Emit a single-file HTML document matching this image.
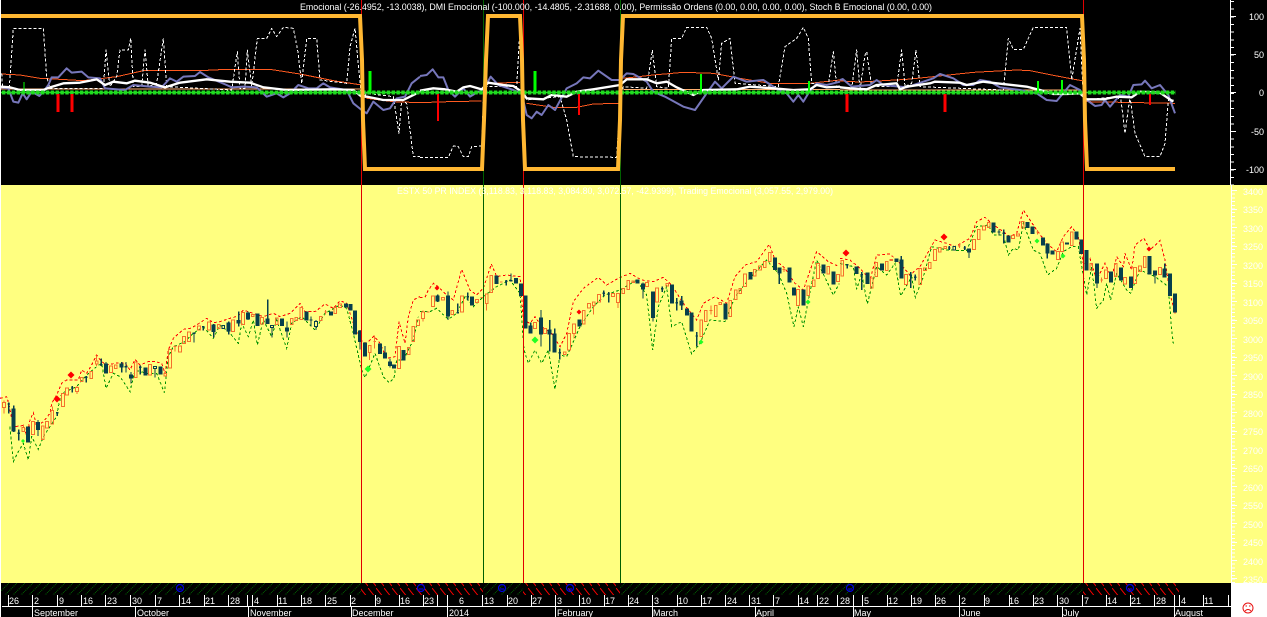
<!DOCTYPE html>
<html><head><meta charset="utf-8"><title>Chart</title>
<style>html,body{margin:0;padding:0;background:#fff;overflow:hidden}svg{display:block}text{font-family:"Liberation Sans",sans-serif;font-size:9px;fill:#fff}</style></head>
<body>
<svg width="1267" height="617" viewBox="0 0 1267 617" xmlns="http://www.w3.org/2000/svg">
<defs>
<pattern id="hg" width="8" height="8" patternUnits="userSpaceOnUse"><path d="M0 8L8 0" stroke="#006400" stroke-dasharray="1 1" fill="none"/></pattern>
<pattern id="hr" width="8" height="12" patternUnits="userSpaceOnUse"><path d="M0 0L8 10" stroke="#f00" fill="none"/></pattern>
</defs>
<rect x="0" y="0" width="1267" height="617" fill="#fff"/>
<rect x="1" y="0" width="1266" height="185" fill="#000"/>
<rect x="1" y="185" width="1266" height="398" fill="#ffff80"/>
<rect x="1" y="583" width="1230" height="34" fill="#000"/>

<!-- top panel lines, section 1 -->
<g transform="scale(.33333)" fill="none" stroke-linejoin="round">
<path stroke="#ffb070" stroke-width="3" shape-rendering="crispEdges" d="M3 267H1085"/>
<path stroke="#ff5a20" stroke-width="3" shape-rendering="crispEdges" d="M3 222L60 225L120 235L180 238L250 242L350 230L430 212L600 212L680 208L810 208L900 222L1000 242L1085 255M1100 295L1180 305L1260 308"/>
<path stroke="#fff" stroke-width="3" stroke-dasharray="9 6" shape-rendering="crispEdges" d="M5 220L8 262L28 262L40 85L130 85L140 230L150 265L310 265L318 150L330 260L350 230L360 150L385 150L392 115L400 260L425 260L435 150L445 260L470 250L490 115L500 260L695 270L712 155L720 265L735 265L742 150L755 260L772 115L800 115L815 85L830 110L850 82L880 85L893 150L905 250L920 115L950 115L960 240L1040 250L1050 140L1065 85L1085 300L1100 280L1180 290L1197 400L1205 300L1220 310L1240 470L1260 470"/>
<path stroke="#7777bb" stroke-width="6" d="M3 262L25 265L40 305L55 308L68 280L80 298L95 275L118 288L130 275L145 255L155 232L175 232L200 205L215 218L245 215L265 232L300 235L315 265L375 270L400 255L450 260L485 262L510 235L530 245L550 230L585 228L600 216L625 232L680 255L695 262L730 260L770 262L800 290L830 280L850 292L870 280L895 255L925 265L950 265L970 250L990 262L1040 270L1060 310L1085 330L1100 340L1120 305L1150 330L1170 325L1190 295L1215 290L1235 250L1260 230"/>
<path stroke="#fff" stroke-width="7" d="M3 260L30 262L60 270L130 270L150 262L190 250L240 248L290 238L315 255L340 245L380 250L405 242L450 248L495 262L540 248L620 238L690 245L750 248L790 262L860 270L1000 268L1060 270L1085 290L1100 290L1150 300L1190 300L1210 300L1260 275"/>
</g>
<!-- section 2 -->
<g transform="translate(420,0) scale(.33333)" fill="none" stroke-linejoin="round">
<path stroke="#ffb070" stroke-width="3" shape-rendering="crispEdges" d="M610 268H1260"/>
<path stroke="#ff5a20" stroke-width="3" shape-rendering="crispEdges" d="M0 308L85 305L185 303M205 250L300 247M320 310L400 322L470 322L520 312L600 310M610 235L700 225L790 217L880 220L960 235L1050 250L1170 250L1260 240"/>
<path stroke="#fff" stroke-width="3" stroke-dasharray="9 6" shape-rendering="crispEdges" d="M0 472L85 472L100 438L115 440L130 470L145 470L155 440L185 438L190 300L200 260L290 260L300 85L305 260L320 300L420 290L440 360L460 470L590 472L600 300L610 260L680 265L697 150L710 260L745 265L755 115L785 115L800 82L860 82L875 115L895 240L905 130L930 115L945 250L1075 260L1095 140L1130 115L1150 82L1165 115L1175 250L1225 255L1240 155L1250 260L1260 260"/>
<path stroke="#7777bb" stroke-width="6" d="M0 228L20 225L38 208L55 232L70 232L85 270L105 290L130 265L150 290L175 275L190 270L212 230L235 255L280 270L305 280L320 345L335 355L350 335L365 345L385 315L405 330L440 265L470 250L490 232L510 235L535 212L575 240L600 240L620 220L640 222L680 245L700 275L735 290L790 320L825 330L860 280L885 245L905 265L940 230L980 245L1030 240L1075 270L1100 280L1120 305L1135 285L1150 305L1165 280L1190 250L1220 255L1260 245"/>
<path stroke="#fff" stroke-width="7" d="M0 272L40 265L75 268L110 275L130 262L150 258L185 268L205 248L250 255L280 258L305 275L320 295L370 298L395 285L440 290L470 275L520 268L600 255L620 238L680 238L710 250L740 245L770 262L820 285L850 270L950 268L990 260L1060 265L1120 270L1170 268L1190 255L1220 262L1260 260"/>
</g>
<!-- section 3 -->
<g transform="translate(840,0) scale(.33333)" fill="none" stroke-linejoin="round">
<path stroke="#ffb070" stroke-width="3" shape-rendering="crispEdges" d="M0 270H720"/>
<path stroke="#ff5a20" stroke-width="3" shape-rendering="crispEdges" d="M0 243L60 246L200 238L280 230L400 217L530 210L570 212L640 226L730 243M740 305L1005 310"/>
<path stroke="#fff" stroke-width="3" stroke-dasharray="9 6" shape-rendering="crispEdges" d="M0 260L35 265L50 150L60 270L75 165L80 155L95 260L170 260L185 150L195 260L215 250L228 150L240 260L490 270L505 115L520 148L550 148L580 82L680 82L695 240L720 85L730 290L740 300L825 290L843 300L855 400L870 290L885 400L915 470L960 470L975 430L985 300L1000 300"/>
<path stroke="#7777bb" stroke-width="6" d="M0 240L8 237L35 260L90 255L110 240L130 255L200 262L280 235L300 222L340 235L370 255L400 255L420 240L450 245L480 262L540 270L590 280L620 300L650 303L690 255L720 270L740 300L765 318L785 315L795 300L810 320L840 285L865 290L880 255L905 253L915 242L935 265L960 255L985 285L1005 340"/>
<path stroke="#fff" stroke-width="7" d="M0 262L30 265L80 268L110 255L170 250L180 268L200 260L270 250L285 245L360 248L380 255L430 245L470 250L560 260L600 270L640 282L680 282L720 280L740 298L790 298L830 290L875 292L900 275L960 278L1000 305"/>
</g>
<g fill="none">
<path stroke="#22e022" stroke-width="1.5" d="M1 92.5H1175"/>
<path stroke="#1fdc1f" stroke-width="4" stroke-dasharray="3.4 1.47" d="M2 92.5H1176"/>
<path stroke="#00ff00" stroke-width="1" d="M24 82V92"/>
<path stroke="#00ff00" stroke-width="3" d="M370 71V92M535 71V92"/>
<path stroke="#00ff00" stroke-width="2" d="M701 74V92M809 81V92M1038 81V92M1062 80V92"/>
<path stroke="#ff0000" stroke-width="3" d="M58 94V112M72 94V112M847 94V112M945 94V112"/>
<path stroke="#ff0000" stroke-width="2" d="M438 94V121M579 94V115M1150 94V105"/>
</g>

<!-- candle groups: left -->
<g transform="translate(0,280) scale(.33333)" fill="none" shape-rendering="crispEdges" stroke-width="3">
<path stroke="#f00" stroke-dasharray="8 7" d="M0 355L20 350L26 370L40 440L60 438L72 436L80 470L90 420L100 398L110 440L130 425L150 400L155 370L170 345L185 310L200 300L235 300L245 270L260 280L275 255L290 225L305 245L320 255L345 250L375 248L390 270L405 238L420 255L445 245L465 245L485 250L495 280L505 210L520 175L550 148L570 145L590 135L620 115L640 128L660 125L690 115L715 108L730 90L760 100L790 110L820 100L840 110L870 100L900 70L915 95L945 95L975 72L1000 85L1020 62L1040 70L1060 130L1080 180L1100 190L1122 168L1140 190L1160 235L1185 230L1197 125L1215 190L1225 110L1240 60L1260 50"/>
<path stroke="#009000" stroke-dasharray="8 7" d="M30 440L40 545L55 515L70 490L85 540L95 470L115 508L130 470L150 440L170 410L175 380L185 340L230 320L260 285L290 260L305 250L318 325L340 280L360 290L390 335L405 270L440 280L470 280L493 338L505 230L520 200L555 185L580 160L610 140L640 175L660 135L690 160L715 190L725 130L745 170L760 120L772 195L790 120L815 170L830 120L860 205L875 130L905 110L945 150L975 100L1020 75L1040 85L1060 160L1085 270L1095 293L1125 220L1150 290L1168 308L1182 295L1190 240L1210 240L1240 180L1255 110"/>
<path stroke="#f4702c" d="M8 368h8v14h-8zM12 362v6M12 382v18M66 442h8v13h-8zM70 434v8M95 424h8v40h-8zM124 438h8v40h-8zM137 424h8v20h-8zM153 392h8v40h-8zM157 380v12M185 340h8v40h-8zM197 324h8v21h-8zM227 322h8v13h-8zM231 318v4M231 335v7M241 292h8v13h-8zM270 274h8v21h-8zM286 243h8v9h-8zM290 226v17M290 252v6M329 258h8v20h-8zM343 255h8v10h-8zM403 246h8v46h-8zM446 254h8v31h-8zM492 280h8v8h-8zM506 208h8v56h-8zM521 200h8M525 196v19M536 198h8v18h-8zM548 170h8v20h-8zM563 156h8v28h-8zM593 138h8v12h-8zM623 126h8v24h-8zM652 134h8v12h-8zM695 120h8v34h-8zM725 98h8v36h-8zM754 104h8v6h-8zM782 112h8v20h-8zM826 114h8v20h-8zM871 116h8v18h-8zM885 112h8v10h-8zM900 82h8v36h-8zM958 110h8v12h-8zM973 96h8M977 90v14M1002 82h8v18h-8zM1016 72h8v10h-8zM1105 196h8v22h-8zM1109 218v22M1120 184h8M1124 166v40M1193 200h8v66h-8zM1222 202h8v22h-8zM1236 140h8v45h-8zM1250 120h8v16h-8z"/>
<path stroke="#073f4c" stroke-width="4" fill="#073f4c" d="M22 372h8M26 368v32M37 388h8v64h-8zM41 376v80M52 460h8M56 448v34M80 442h8v44h-8zM110 428h8v20h-8zM114 420v48M168 398h8M172 396v12M213 324h8M217 318v20M255 292h8M259 288v20M300 254h8M304 236v22M314 252h8v26h-8zM318 246v6M361 252h8v8h-8zM365 246v32M374 260h8M378 246v32M389 286h8v8h-8zM393 276v34M417 262h8M421 256v28M432 265h8v20h-8zM465 266v26M478 262h8v20h-8zM578 160h8M582 158v30M606 140h8M610 138v14M637 136h8v18h-8zM641 132v40M682 130h8v22h-8zM686 124v40M712 122h8v6h-8zM716 94v46M740 100h8v16h-8zM744 94v26M769 102h8v34h-8zM799 118h8v12h-8zM803 58v72M816 143v29M842 118h8v18h-8zM857 144h8v8h-8zM861 124v48M916 96h8v24h-8zM929 120h8M933 110v30M948 120v4M948 140v10M989 96h8v8h-8zM1034 72h8v8h-8zM1048 74h8v16h-8zM1061 94h8v68h-8zM1076 154h8v30h-8zM1080 150v58M1091 190h8v38h-8zM1136 192h8v28h-8zM1151 220h8v14h-8zM1155 198v36M1166 246h8v10h-8zM1170 236v26M1178 255h8v9h-8zM1207 212h8v28h-8z"/>
<path stroke="#073f4c" fill="#ffff80" d="M461 260h8v6h-8zM666 136h8v10h-8zM812 136h8v7h-8zM944 124h8v16h-8z"/>
</g>

<!-- candle groups: middle -->
<g transform="translate(420,180) scale(.33333)" fill="none" shape-rendering="crispEdges" stroke-width="3">
<path stroke="#f00" stroke-dasharray="8 7" d="M0 352L15 352L25 330L40 310L55 320L80 345L100 360L125 268L150 330L170 345L190 325L214 252L230 290L260 285L300 290L310 420L330 430L345 410L365 440L395 460L420 500L440 460L460 365L490 325L535 292L560 315L595 295L630 280L665 300L700 305L730 292L755 315L790 370L830 420L850 370L885 350L920 370L945 290L975 255L1010 245L1048 193L1065 240L1095 265L1125 310L1150 330L1190 215L1225 245L1258 260"/>
<path stroke="#009000" stroke-dasharray="8 7" d="M0 395L30 395L50 385L85 418L110 400L135 350L160 380L190 350L230 320L270 300L300 340L312 510L325 550L345 510L365 550L385 510L405 628L420 525L440 530L480 440L520 380L555 345L600 330L650 300L680 345L698 510L715 380L740 320L755 440L785 425L815 522L840 490L870 420L915 425L945 350L985 300L1040 240L1075 280L1100 340L1122 440L1135 380L1150 440L1165 360L1190 240L1240 345L1258 310"/>
<path stroke="#f4702c" d="M5 396h8v19h-8zM9 392v4M9 415v9M20 396h8M35 348h8v32h-8zM65 352h8v8h-8zM93 392h8v12h-8zM122 348h8v48h-8zM167 358h8v10h-8zM182 352h8M196 342h8v28h-8zM200 370v22M210 286h8v52h-8zM240 306h8M341 428h8v18h-8zM371 446h8v14h-8zM430 516h8v8h-8zM443 460h8v50h-8zM458 432h8v28h-8zM462 460v16M487 392h8v40h-8zM503 370h8v14h-8zM517 366h8v10h-8zM521 376v28M533 344h8v22h-8zM575 340h8v10h-8zM590 340h8v28h-8zM594 368v16M606 326h8v14h-8zM621 302h8v26h-8zM636 303h8v5h-8zM677 308h8v12h-8zM707 324h8v42h-8zM738 310h8v8h-8zM840 420h8v50h-8zM853 392h8v32h-8zM869 392h8M873 376v28M883 376h8v34h-8zM897 368h8v6h-8zM927 362h8v48h-8zM943 330h8v28h-8zM957 326h8v14h-8zM971 282h8v38h-8zM1000 268h8v20h-8zM1016 258h8v12h-8zM1030 244h8v18h-8zM1045 218h8v26h-8zM1088 268h8M1092 262v14M1130 328h8v48h-8zM1161 318h8v28h-8zM1177 300h8v20h-8zM1190 250h8v46h-8zM1221 260h8v22h-8zM1250 284h8v20h-8z"/>
<path stroke="#073f4c" stroke-width="4" fill="#073f4c" d="M49 348h8v14h-8zM53 344v22M80 348h8v60h-8zM84 334v86M109 398h8M113 370v30M139 350h8M143 338v24M152 352h8v22h-8zM226 288h8v22h-8zM255 304h8M259 300v16M269 302h8M273 280v22M284 296h8v12h-8zM299 312h8v34h-8zM313 348h8v96h-8zM328 438h8v20h-8zM332 428v10M359 414h8v48h-8zM363 390v110M385 450h8v12h-8zM389 420v95M400 462h8v54h-8zM404 446v16M415 518h8M419 506v32M475 420h8v18h-8zM547 340h8M551 332v18M562 342h8M566 336v32M649 300h8v8h-8zM665 312h8v14h-8zM669 308v48M695 336h8v76h-8zM699 412v13M723 326h8M727 320v16M752 316h8v52h-8zM766 368h8M770 354v38M781 364h8v10h-8zM785 348v42M797 388h8v16h-8zM811 400h8v52h-8zM826 468h8M830 456v44M913 372h8v44h-8zM987 278h8v18h-8zM1061 234h8v34h-8zM1074 264h8v14h-8zM1078 278v34M1104 264h8v42h-8zM1118 324h8v20h-8zM1147 330h8v44h-8zM1206 256h8v22h-8zM1236 276h8v36h-8z"/>
</g>

<!-- candle groups: right -->
<g transform="translate(840,180) scale(.33333)" fill="none" shape-rendering="crispEdges" stroke-width="3">
<path stroke="#f00" stroke-dasharray="8 7" d="M0 235L30 240L60 265L90 300L110 225L150 222L175 245L210 285L240 260L285 180L320 190L345 200L390 175L410 125L435 112L455 130L510 170L530 160L550 90L590 150L620 190L650 215L670 170L695 140L715 170L730 250L750 235L770 300L795 250L815 295L830 230L850 260L855 220L875 270L885 195L912 175L930 210L960 182L975 240L990 340L1005 400"/>
<path stroke="#009000" stroke-dasharray="8 7" d="M0 250L40 260L50 328L65 280L82 372L110 260L140 285L165 250L182 348L215 290L226 352L250 290L275 200L320 210L380 212L410 140L445 135L460 165L490 165L505 225L520 205L535 210L550 130L580 210L600 220L623 285L650 265L670 215L695 200L715 200L740 345L755 260L770 385L790 360L800 310L812 360L830 280L860 330L872 340L900 270L945 290L985 320L995 450L1000 490"/>
<path stroke="#f4702c" d="M3 242h8v46h-8zM91 294h8v30h-8zM105 248h8v42h-8zM136 244h8v28h-8zM150 238h8v4h-8zM194 284h8v30h-8zM237 266h8v48h-8zM251 264h8v8h-8zM265 248h8v18h-8zM281 208h8v34h-8zM295 202h8v14h-8zM312 200h8v6h-8zM354 198h8M358 192v12M398 178h8v30h-8zM412 148h8v30h-8zM428 138h8v12h-8zM442 128h8v14h-8zM515 166h8v10h-8zM530 162h8v6h-8zM544 124h8v20h-8zM589 156h8M593 150v14M650 214h8v24h-8zM662 186h8v28h-8zM691 156h8v40h-8zM750 250h8v20h-8zM781 300h8M785 292v16M794 270h8v26h-8zM823 250h8v40h-8zM851 292h8v20h-8zM881 262h8v48h-8zM896 258h8v16h-8zM910 230h8v32h-8zM956 262h8v22h-8z"/>
<path stroke="#073f4c" stroke-width="4" fill="#073f4c" d="M18 254h8M22 254v12M46 262h8v18h-8zM61 284h8M65 276v54M78 280h8v30h-8zM122 252h8v18h-8zM166 238h8v6h-8zM180 240h8v54h-8zM184 228v12M208 286h8M212 276v48M222 292h8M226 284v18M324 204h8M328 198v12M370 204h8M374 198v12M383 208h8v8h-8zM387 216v18M457 130h8v26h-8zM473 156h8M477 148v18M487 160h8M491 148v42M501 168h8v18h-8zM559 128h8v14h-8zM574 142h8v18h-8zM605 174h8v20h-8zM618 192h8v26h-8zM622 218v18M634 214h8v8h-8zM677 190h8v2h-8zM706 156h8v20h-8zM721 180h8v40h-8zM735 212h8v58h-8zM767 252h8v56h-8zM771 308v16M809 276h8v30h-8zM839 264h8v36h-8zM869 292h8v30h-8zM925 230h8v52h-8zM941 274h8v10h-8zM945 284v26M970 268h8v22h-8zM974 250v18M986 282h8v64h-8zM1001 342h8v54h-8z"/>
<path stroke="#073f4c" fill="#ffff80" d="M339 200h8v10h-8z"/>
</g>

<!-- diamonds -->
<g fill="#ff0000">
<polygon points="57,395.5 60.5,399 57,402.5 53.5,399"/><polygon points="71,371.5 74.5,375 71,378.5 67.5,375"/><polygon points="437,285.5 439.5,288 437,290.5 434.5,288"/><polygon points="579,309.5 581.5,312 579,314.5 576.5,312"/><polygon points="846,249.5 849.5,253 846,256.5 842.5,253"/><polygon points="944,233.5 947.5,237 944,240.5 940.5,237"/><polygon points="1149,246.5 1151.5,249 1149,251.5 1146.5,249"/>
</g>
<g fill="#22ff22">
<polygon points="23,439 25,441 23,443 21,441"/><polygon points="368,365.5 371.5,369 368,372.5 364.5,369"/><polygon points="535,336.5 538.5,340 535,343.5 531.5,340"/><polygon points="701,339.5 703.5,342 701,344.5 698.5,342"/><polygon points="808,299.5 810.5,302 808,304.5 805.5,302"/><polygon points="1037,238.5 1039.5,241 1037,243.5 1034.5,241"/><polygon points="1063,253.5 1065.5,256 1063,258.5 1060.5,256"/>
</g>

<!-- hatch band -->
<rect x="1" y="583" width="360" height="12" fill="url(#hg)"/>
<rect x="361" y="583" width="122" height="12" fill="url(#hr)"/>
<rect x="483" y="583" width="40" height="12" fill="url(#hg)"/>
<rect x="523" y="583" width="97" height="12" fill="url(#hr)"/>
<rect x="620" y="583" width="463" height="12" fill="url(#hg)"/>
<rect x="1083" y="583" width="96" height="12" fill="url(#hr)"/>
<g fill="none" stroke="#0000dd" stroke-width="1.2">
<circle cx="180" cy="588" r="3.5"/><path d="M178 589h4"/>
<circle cx="421" cy="588" r="3.5"/><path d="M419 589h4"/>
<circle cx="502" cy="588" r="3.5"/><path d="M500 589h4"/>
<circle cx="570" cy="588" r="3.5"/><path d="M568 589h4"/>
<circle cx="850" cy="588" r="3.5"/><path d="M848 589h4"/>
<circle cx="1130" cy="588" r="3.5"/><path d="M1128 589h4"/>
</g>

<!-- vertical markers -->
<g shape-rendering="crispEdges" stroke-width="1" fill="none">
<path stroke="#e00000" d="M361.5 0V583M523.5 0V583M1083.5 0V583"/>
<path stroke="#006000" d="M483.5 0V583M620.5 0V583"/>
</g>

<!-- thick orange -->
<path fill="none" stroke="#ffb732" stroke-width="4" stroke-linejoin="miter" d="M1 16H360L362 60L363 120L365 169H482L484 120L486 60L488 16H520L522 60L523 120L525 169H618L620 120L621 60L623 16H1082L1084 60L1085 120L1087 169H1175"/>

<!-- bottom scale -->
<g fill="none" stroke="#fff" stroke-width="1" shape-rendering="crispEdges">
<path d="M2 606.5H1231"/>
<path d="M8.5 595V606M32.5 595V606M57.5 595V606M81.5 595V606M105.5 595V606M130.5 595V606M155.5 595V606M179.5 595V606M204.5 595V606M228.5 595V606M247.5 595V606M252.5 595V606M277.5 595V606M301.5 595V606M325.5 595V606M350.5 595V606M375.5 595V606M399.5 595V606M423.5 595V606M437.5 595V606M447.5 595V606M482.5 595V606M507.5 595V606M531.5 595V606M555.5 595V606M579.5 595V606M604.5 595V606M628.5 595V606M652.5 595V606M677.5 595V606M701.5 595V606M725.5 595V606M749.5 595V606M773.5 595V606M798.5 595V606M817.5 595V606M837.5 595V606M853.5 595V606M862.5 595V606M887.5 595V606M911.5 595V606M935.5 595V606M959.5 595V606M984.5 595V606M1009.5 595V606M1033.5 595V606M1057.5 595V606M1082.5 595V606M1106.5 595V606M1130.5 595V606M1154.5 595V606M1174.5 595V606M1179.5 595V606M1203.5 595V606M1228.5 595V606"/>
<path d="M32.5 606V617M135.5 606V617M248.5 606V617M351.5 606V617M447.5 606V617M555.5 606V617M652.5 606V617M755.5 606V617M853.5 606V617M959.5 606V617M1062.5 606V617M1174.5 606V617"/>
</g>
<g>
<text x="9" y="604">26</text><text x="34" y="604">2</text><text x="59" y="604">9</text><text x="83" y="604">16</text><text x="107" y="604">23</text><text x="132" y="604">30</text><text x="157" y="604">7</text><text x="181" y="604">14</text><text x="205" y="604">21</text><text x="230" y="604">28</text><text x="254" y="604">4</text><text x="278" y="604">11</text><text x="302" y="604">18</text><text x="327" y="604">25</text><text x="351" y="604">2</text><text x="376" y="604">9</text><text x="400" y="604">16</text><text x="424" y="604">23</text><text x="459" y="604">6</text><text x="484" y="604">13</text><text x="508" y="604">20</text><text x="532" y="604">27</text><text x="557" y="604">3</text><text x="581" y="604">10</text><text x="605" y="604">17</text><text x="629" y="604">24</text><text x="654" y="604">3</text><text x="678" y="604">10</text><text x="702" y="604">17</text><text x="727" y="604">24</text><text x="751" y="604">31</text><text x="775" y="604">7</text><text x="799" y="604">14</text><text x="819" y="604">22</text><text x="840" y="604">28</text><text x="864" y="604">5</text><text x="888" y="604">12</text><text x="912" y="604">19</text><text x="936" y="604">26</text><text x="961" y="604">2</text><text x="985" y="604">9</text><text x="1009" y="604">16</text><text x="1034" y="604">23</text><text x="1059" y="604">30</text><text x="1084" y="604">7</text><text x="1107" y="604">14</text><text x="1131" y="604">21</text><text x="1156" y="604">28</text><text x="1181" y="604">4</text><text x="1204" y="604">11</text>
<text x="34" y="616">September</text><text x="137" y="616">October</text><text x="250" y="616">November</text><text x="352" y="616">December</text><text x="449" y="616">2014</text><text x="557" y="616">February</text><text x="653" y="616">March</text><text x="756" y="616">April</text><text x="854" y="616">May</text><text x="961" y="616">June</text><text x="1063" y="616">July</text><text x="1175" y="616">August</text>
</g>

<!-- right axis -->
<g fill="none" stroke="#fff" shape-rendering="crispEdges">
<path d="M1230.5 0V185M1231.5 185V583" stroke-width="1"/>
<path stroke-width="3" stroke-dasharray="1 6.65" d="M1232.5 1V185"/>
<path stroke-width="3" stroke-dasharray="1 2.7" d="M1233.5 190V583"/>
<path stroke-width="1" d="M1231 16.5h5M1231 54.5h5M1231 92.5h5M1231 131.5h5M1231 169.5h5M1232 190.5h5M1232 209.5h5M1232 227.5h5M1232 246.5h5M1232 264.5h5M1232 283.5h5M1232 301.5h5M1232 320.5h5M1232 338.5h5M1232 357.5h5M1232 375.5h5M1232 394.5h5M1232 412.5h5M1232 431.5h5M1232 449.5h5M1232 468.5h5M1232 486.5h5M1232 505.5h5M1232 523.5h5M1232 542.5h5M1232 560.5h5M1232 578.5h5"/>
</g>
<g text-anchor="end">
<text x="1264" y="20">100</text><text x="1264" y="58">50</text><text x="1264" y="96">0</text><text x="1264" y="135">-50</text><text x="1264" y="173">-100</text>
</g>
<g text-anchor="end">
<text x="1263" y="195">3400</text><text x="1263" y="213">3350</text><text x="1263" y="232">3300</text><text x="1263" y="250">3250</text><text x="1263" y="269">3200</text><text x="1263" y="287">3150</text><text x="1263" y="306">3100</text><text x="1263" y="324">3050</text><text x="1263" y="343">3000</text><text x="1263" y="361">2950</text><text x="1263" y="380">2900</text><text x="1263" y="398">2850</text><text x="1263" y="417">2800</text><text x="1263" y="435">2750</text><text x="1263" y="454">2700</text><text x="1263" y="472">2650</text><text x="1263" y="491">2600</text><text x="1263" y="509">2550</text><text x="1263" y="528">2500</text><text x="1263" y="546">2450</text><text x="1263" y="565">2400</text><text x="1263" y="583">2350</text>
</g>

<!-- titles -->
<text x="300" y="10" textLength="632" lengthAdjust="spacingAndGlyphs">Emocional (-26.4952, -13.0038), DMI Emocional (-100.000, -14.4805, -2.31688, 0.00), Permissão Ordens (0.00, 0.00, 0.00, 0.00), Stoch B Emocional (0.00, 0.00)</text>
<text x="397" y="194" textLength="436" lengthAdjust="spacingAndGlyphs">ESTX 50 PR INDEX (3,118.83, 3,118.83, 3,084.80, 3,072.57, -42.9399), Trading Emocional (3,057.55, 2,979.00)</text>

<!-- sad face -->
<g fill="none" stroke="#e81010" stroke-width="1">
<circle cx="1248" cy="608" r="5"/>
<path d="M1245.3 611c1-2 4.4-2 5.4 0"/>
<path d="M1245.5 606h1.5M1249 606h1.5"/>
</g>
</svg>
</body></html>
